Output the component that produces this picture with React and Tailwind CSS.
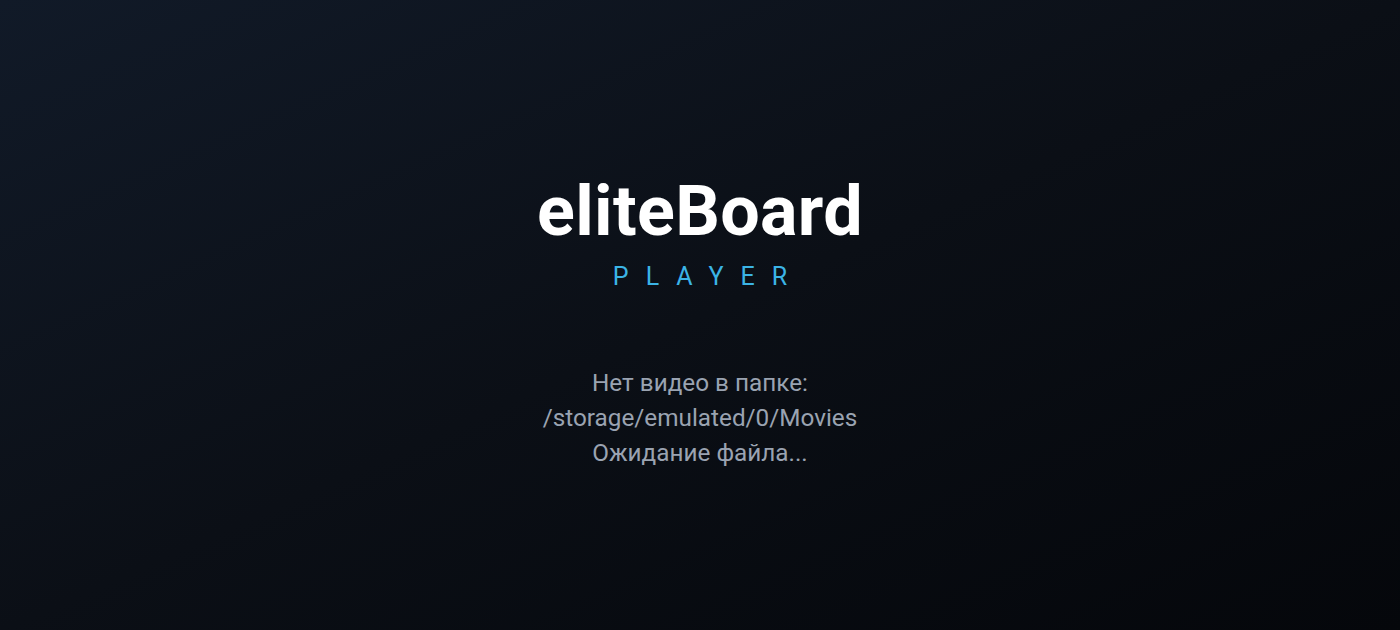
export default function App() {
  return (
    <div
      className="w-full h-[630px] flex flex-col items-center justify-center bg-gradient-to-br from-[#111a28] via-[#0b0f16] to-[#05070b] text-center"
      style={{ fontFamily: "Roboto, 'Noto Sans', sans-serif" }}
    >
      <div className="flex flex-col items-center mt-[16px]">
        <h1 className="text-[70px] leading-none font-bold text-white tracking-[0.005em]">eliteBoard</h1>
        <div className="mt-[18px] text-[25px] leading-none text-[#3bb4e6] tracking-[0.68em] pl-[0.68em]">PLAYER</div>
      </div>
      <div className="mt-[76px] text-[24.3px] leading-[35px] text-[#9aa3b1]">
        <p>Нет видео в папке:</p>
        <p>/storage/emulated/0/Movies</p>
        <p>Ожидание файла...</p>
      </div>
    </div>
  );
}
